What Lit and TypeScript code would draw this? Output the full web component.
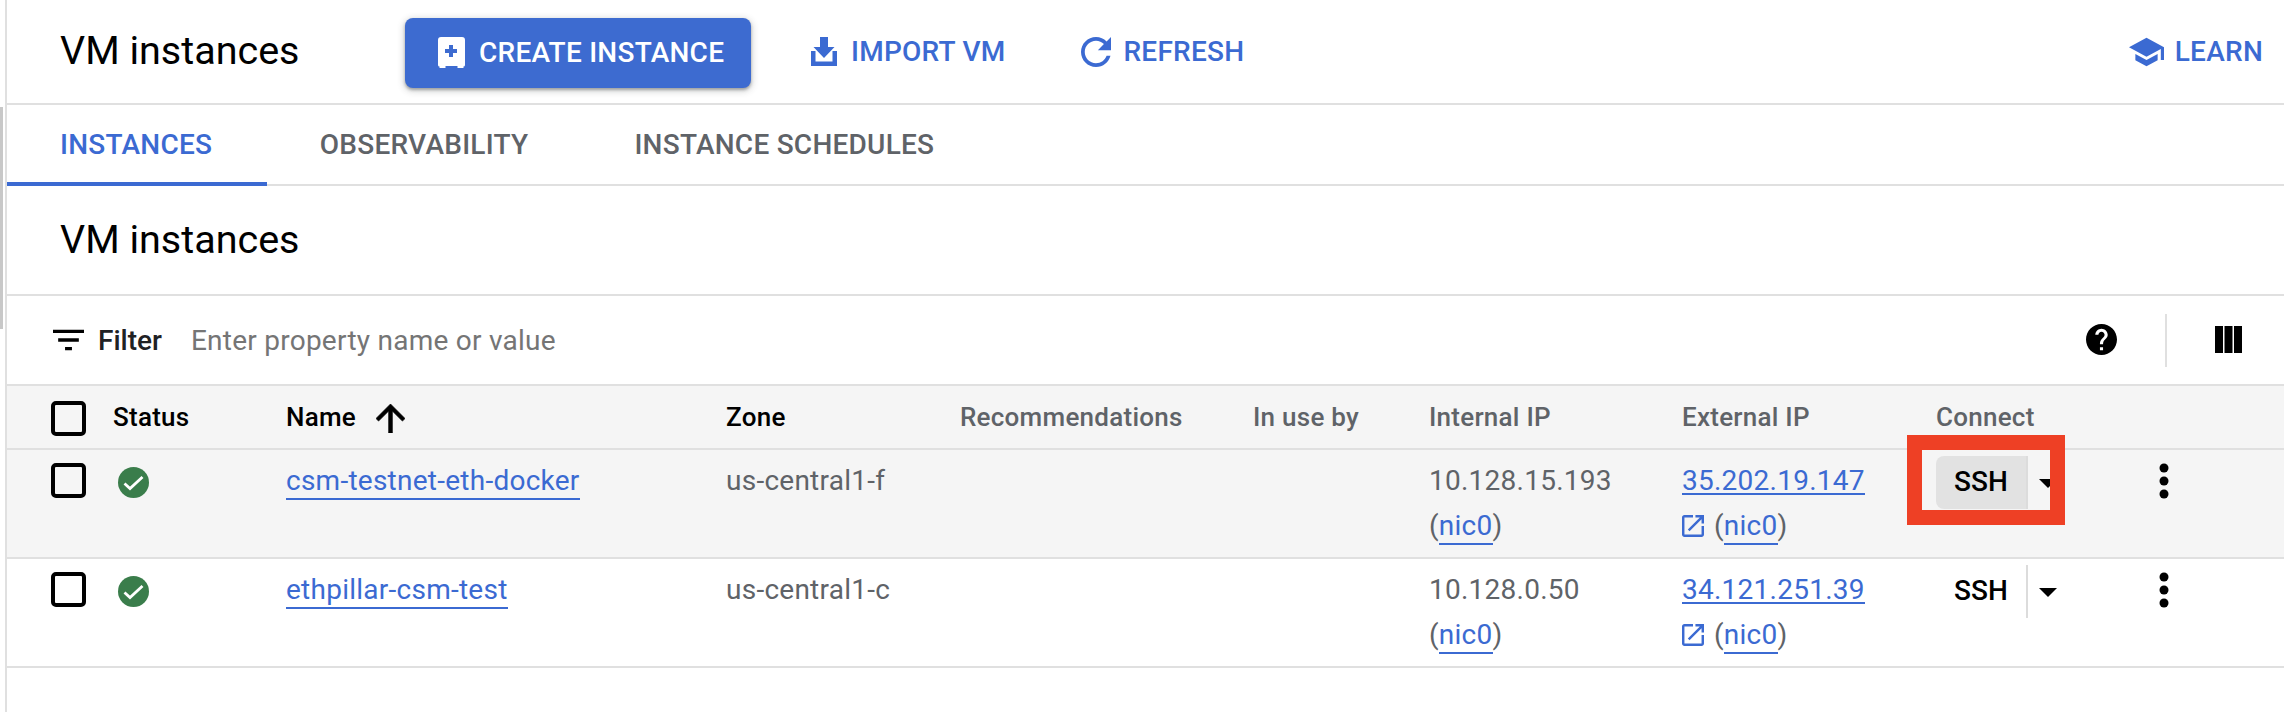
import { LitElement, html, css } from "lit";
import { customElement } from "lit/decorators.js";

const ico = (vb: string, w: number, h: number, d: string, cls = "") => html`<svg class="ico ${cls}" viewBox=${vb} width=${w} height=${h}><path d=${d}></path></svg>`;

const P = {
  refresh: "M17.65 6.35C16.2 4.9 14.21 4 12 4c-4.42 0-7.99 3.58-7.99 8s3.57 8 7.99 8c3.73 0 6.84-2.55 7.73-6h-2.08c-.82 2.33-3.04 4-5.65 4-3.31 0-6-2.69-6-6s2.69-6 6-6c1.66 0 3.14.69 4.22 1.78L13 11h7V4l-2.35 2.35z",
  school: "M5 13.18v4L12 21l7-3.82v-4L12 17l-7-3.82zM12 3L1 9l11 6 9-4.91V17h2V9L12 3z",
  help: "M12 2C6.48 2 2 6.48 2 12s4.48 10 10 10 10-4.48 10-10S17.52 2 12 2zm1 17h-2v-2h2v2zm2.07-7.75l-.9.92C13.45 12.9 13 13.5 13 15h-2v-.5c0-1.1.45-2.1 1.17-2.83l1.24-1.26c.37-.36.59-.86.59-1.41 0-1.1-.9-2-2-2s-2 .9-2 2H8c0-2.21 1.79-4 4-4s4 1.79 4 4c0 .88-.36 1.68-.93 2.25z",
  filter: "M10 18h4v-2h-4v2zM3 6v2h18V6H3zm3 7h12v-2H6v2z",
  up: "M4 12l1.41 1.41L11 7.83V20h2V7.83l5.58 5.59L20 12l-8-8-8 8z",
  ext: "M19 19H5V5h7V3H5c-1.11 0-2 .9-2 2v14c0 1.1.89 2 2 2h14c1.1 0 2-.9 2-2v-7h-2v7zM14 3v2h3.59l-9.83 9.83 1.41 1.41L19 6.41V10h2V3h-7z",
  download: "M9 0h8v10h6.500L13 21 2.500 10H9zM0 14h4.500v10.500h17V14H26v15H0z",
  create: "M3 0h21a3 3 0 0 1 3 3v25a1.500 1.500 0 0 1-1.500 1.500V31h-6v-2H7.500v2h-6v-1.500A1.500 1.500 0 0 1 0 28V3a3 3 0 0 1 3-3zM11 8v4H7v4h4v4h4v-4h4v-4h-4V8z",
};

const checkbox = html`<span class="checkbox"></span>`;
const statusIcon = html`<svg class="status" viewBox="0 0 31 31" width="31" height="31"><circle cx="15.500" cy="15.500" r="15.500" fill="#3a7d4b"></circle><path d="M6.500 16.500l5.500 5L24.500 10" fill="none" stroke="#fff" stroke-width="2.800"></path></svg>`;
const kebab = html`<svg class="kebab" viewBox="0 0 10 36" width="10" height="36"><circle cx="5" cy="5" r="4.500"></circle><circle cx="5" cy="18" r="4.500"></circle><circle cx="5" cy="31" r="4.500"></circle></svg>`;
const caret = html`<svg class="caret" viewBox="0 0 18 9" width="18" height="9"><path d="M0 0h18L9 9z"></path></svg>`;

@customElement("app-root")
export class AppRoot extends LitElement {
  static styles = css`
    :host { display: block; width: 2284px; height: 712px; overflow: hidden; background: #fff; font-family: Roboto, "Liberation Sans", sans-serif; position: relative; }
    .ico { display: block; fill: currentColor; flex: none; }
    .scroll { position: absolute; left: 0; top: 107px; width: 3px; height: 222px; background: #c8c8c8; }
    .page { margin-left: 5px; border-left: 2px solid #e0e0e0; height: 712px; box-sizing: border-box; display: flex; flex-direction: column; }
    .head { flex: none; box-sizing: border-box; display: flex; align-items: center; padding-left: 53px; padding-right: 21px; color: #3b6ad2; border-bottom: 2px solid #e0e0e0; height: 105px; }
    h1 { margin: 0; font-weight: 400; font-size: 39.500px; line-height: 44px; color: #000; }
    .head h1 { width: 345px; flex: none; position: relative; top: -1px; }
    .btn { display: flex; align-items: center; font-weight: 500; font-size: 28px; letter-spacing: .25px; line-height: 32px; }
    .create { width: 346px; height: 70px; box-sizing: border-box; background: #3d6bd0; color: #fff; border-radius: 8px; padding-left: 33px; gap: 14px; box-shadow: 0 2px 3px rgba(60,64,67,.4), 0 2px 6px 2px rgba(60,64,67,.18); margin-top: 2px; }
    .import { margin-left: 60px; gap: 14px; }
    .refresh { margin-left: 76px; gap: 12px; }
    .learn { margin-left: auto; gap: 11px; }
    .tabs { height: 81px; flex: none; box-sizing: border-box; display: flex; border-bottom: 2px solid #e0e0e0; font-weight: 500; font-size: 28px; letter-spacing: .25px; color: #5f6368; }
    .tab { padding: 0 53px; display: flex; align-items: center; box-sizing: border-box; }
    .tab.on { color: #3b6ad2; position: relative; padding-right: 54.500px; }
    .tab.on::after { content: ""; position: absolute; left: 0; right: 0; bottom: -2px; height: 4px; background: #3b6ad2; }
    .title { height: 110px; flex: none; box-sizing: border-box; display: flex; align-items: center; padding-left: 53px; border-bottom: 2px solid #e0e0e0; }
    .filter { height: 90px; flex: none; box-sizing: border-box; display: flex; align-items: center; padding-left: 46px; border-bottom: 2px solid #e0e0e0; position: relative; }
    .filter .label { font-weight: 500; font-size: 28px; color: #202124; margin-left: 14px; }
    .filter .ph { font-size: 28px; letter-spacing: .25px; color: #757575; margin-left: 29px; }
    .filter .tools { margin-left: auto; display: flex; align-items: center; padding-right: 42px; }
    .filter .tools .help { color: #000; margin-top: -2px; }
    .sep { width: 2px; height: 53px; background: #e0e0e0; margin: 0 48px 0 48px; }
    .cols { color: #000; margin-top: -1px; display: block; }
    .row { display: grid; grid-template-columns: 62px 173px 440px 234px 293px 176px 253px 254px 210px 1fr; padding-left: 44px; box-sizing: border-box; border-bottom: 2px solid #e0e0e0; flex: none; }
    .thead { height: 64px; background: #f5f5f5; font-weight: 500; font-size: 26px; letter-spacing: .25px; color: #5f6368; align-items: start; padding-top: 15px; }
    .thead .dark { color: #000; display: flex; align-items: center; height: 32px; }
    .thead > div { line-height: 32px; }
    .thead .checkbox { margin-top: 0; }
    .arrow { margin-left: 20px; color: #000; margin-top: 2px; stroke: currentColor; stroke-width: .4px; }
    .body { height: 109px; font-size: 28px; letter-spacing: .25px; line-height: 45px; color: #5f6368; padding-top: 8px; }
    .body.hover { background: #f5f5f5; }
    .body .checkbox { margin-top: 5px; }
    .status { margin: 9px 0 0 5px; display: block; }
    a { color: #3b6ad2; text-decoration: none; border-bottom: 2px solid #3b6ad2; padding-bottom: 1px; }
    a.ip { display: inline-block; line-height: 24px; padding-bottom: 0; }
    .extline { display: flex; align-items: center; }
    .extline .ico { color: #3b6ad2; margin-right: 10px; }
    .checkbox { display: block; width: 35px; height: 35px; box-sizing: border-box; border: 4px solid #000; border-radius: 5px; }
    .ssh { display: flex; height: 53px; width: 92px; margin-top: -2px; padding-bottom: 2px; position: relative; box-sizing: border-box; border-right: 2px solid #dcdcdc; justify-content: center; align-items: center; color: #000; font-weight: 500; font-size: 28px; letter-spacing: 0; }
    .ssh.active { background: #e2e2e2; border-radius: 8px 0 0 8px; }
    .caret { position: absolute; left: 103px; top: 23px; fill: #000; }
    .redbox { position: absolute; left: -29px; top: -21px; width: 158px; height: 90px; box-sizing: border-box; border: 15px solid #ee4025; }
    .kebab { fill: #000; display: block; margin: 5px 0 0 13px; }
  `;

  private renderRow(name: string, zone: string, ip: string, ext: string, active: boolean) {
    return html`<div class="row body ${active ? "hover" : ""}">
      <div>${checkbox}</div>
      <div>${statusIcon}</div>
      <div><a href="#">${name}</a></div>
      <div>${zone}</div>
      <div></div>
      <div></div>
      <div>${ip}<br />(<a href="#">nic0</a>)</div>
      <div><a class="ip" href="#">${ext}</a><div class="extline">${ico("3 3 18 18", 22, 22, P.ext)}<span>(<a href="#">nic0</a>)</span></div></div>
      <div><div class="ssh ${active ? "active" : ""}">SSH${caret}${active ? html`<span class="redbox"></span>` : ""}</div></div>
      <div>${kebab}</div>
    </div>`;
  }

  render() {
    return html`
      <div class="scroll"></div>
      <div class="page">
        <div class="head">
          <h1>VM instances</h1>
          <div class="btn create">${ico("0 0 27 31", 27, 31, P.create)}CREATE INSTANCE</div>
          <div class="btn import">${ico("0 0 26 29", 26, 29, P.download)}IMPORT VM</div>
          <div class="btn refresh">${ico("4 4 16 16", 30, 30, P.refresh)}REFRESH</div>
          <div class="btn learn">${ico("1 3 22 18", 35, 30, P.school)}LEARN</div>
        </div>
        <div class="tabs">
          <div class="tab on">INSTANCES</div>
          <div class="tab">OBSERVABILITY</div>
          <div class="tab">INSTANCE SCHEDULES</div>
        </div>
        <div class="title"><h1>VM instances</h1></div>
        <div class="filter">
          ${ico("3 6 18 12", 31, 22, P.filter)}
          <span class="label">Filter</span>
          <span class="ph">Enter property name or value</span>
          <div class="tools">
            <span class="help">${ico("2 2 20 20", 31, 31, P.help)}</span>
            <span class="sep"></span>
            <svg class="cols" viewBox="0 0 27 27" width="27" height="27"><path d="M0 0h8v27H0zM9.500 0h8v27h-8zM19 0h8v27h-8z"></path></svg>
          </div>
        </div>
        <div class="row thead">
          <div>${checkbox}</div>
          <div class="dark">Status</div>
          <div class="dark">Name${ico("4 4 16 16", 29, 29, P.up, "arrow")}</div>
          <div class="dark">Zone</div>
          <div>Recommendations</div>
          <div>In use by</div>
          <div>Internal IP</div>
          <div>External IP</div>
          <div>Connect</div>
          <div></div>
        </div>
        ${this.renderRow("csm-testnet-eth-docker", "us-central1-f", "10.128.15.193", "35.202.19.147", true)}
        ${this.renderRow("ethpillar-csm-test", "us-central1-c", "10.128.0.50", "34.121.251.39", false)}
      </div>
    `;
  }
}
